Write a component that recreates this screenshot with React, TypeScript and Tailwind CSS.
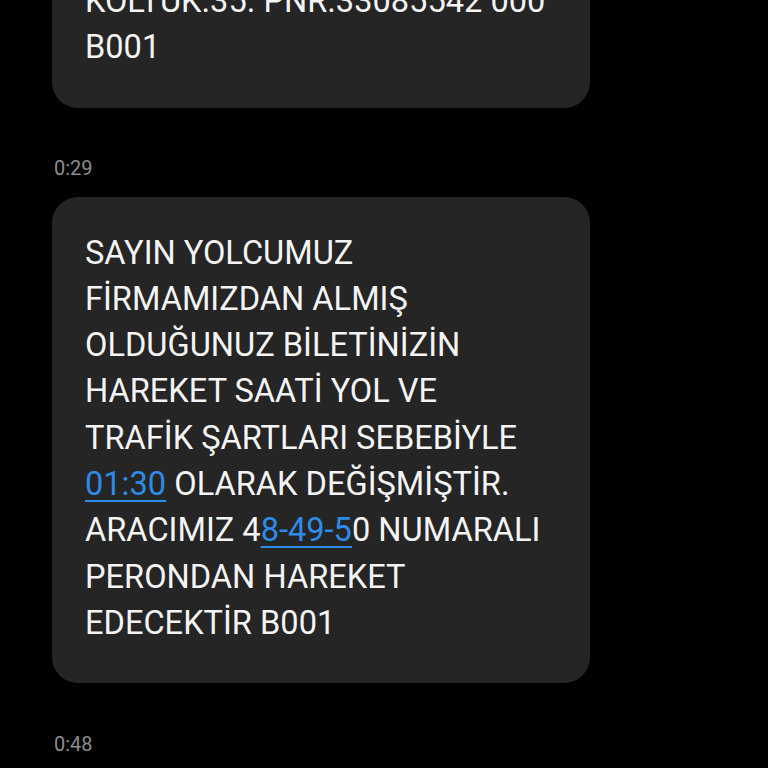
import React from 'react'

const font = { fontFamily: 'Roboto, "Noto Sans", sans-serif' }

function Stamp({ time }: { time: string }) {
  return <p className="ml-[54px] text-[20px] leading-[28px] text-[#8c8c8c]">{time}</p>
}

function Link({ children }: { children: React.ReactNode }) {
  return <span className="text-[#2e8be6] underline decoration-[2px] underline-offset-[5px]">{children}</span>
}

function Bubble({ lines }: { lines: React.ReactNode[] }) {
  return (
    <div className="ml-[52px] w-[538px] rounded-[26px] bg-[#252525] pl-[33px] pr-4 pt-[33px] pb-[37px]">
      {lines.map((line, i) => (
        <p key={i} className="whitespace-nowrap text-[32.6px] leading-[46.3px] text-[#f4f4f4]">
          {line}
        </p>
      ))}
    </div>
  )
}

export default function App() {
  return (
    <div className="h-[768px] w-[768px] overflow-hidden bg-black" style={font}>
      <div className="-mt-[55px]">
        <Bubble lines={['KOLTUK.35. PNR.33085542 000', 'B001']} />
      </div>
      <div className="mt-[46px] mb-[15px]">
        <Stamp time="0:29" />
      </div>
      <Bubble
        lines={[
          'SAYIN YOLCUMUZ',
          'FİRMAMIZDAN ALMIŞ',
          'OLDUĞUNUZ BİLETİNİZİN',
          'HAREKET SAATİ YOL VE',
          'TRAFİK ŞARTLARI SEBEBİYLE',
          <>
            <Link>01:30</Link> OLARAK DEĞİŞMİŞTİR.
          </>,
          <>
            ARACIMIZ 4<Link>8-49-5</Link>0 NUMARALI
          </>,
          'PERONDAN HAREKET',
          'EDECEKTİR B001',
        ]}
      />
      <div className="mt-[47px]">
        <Stamp time="0:48" />
      </div>
    </div>
  )
}
